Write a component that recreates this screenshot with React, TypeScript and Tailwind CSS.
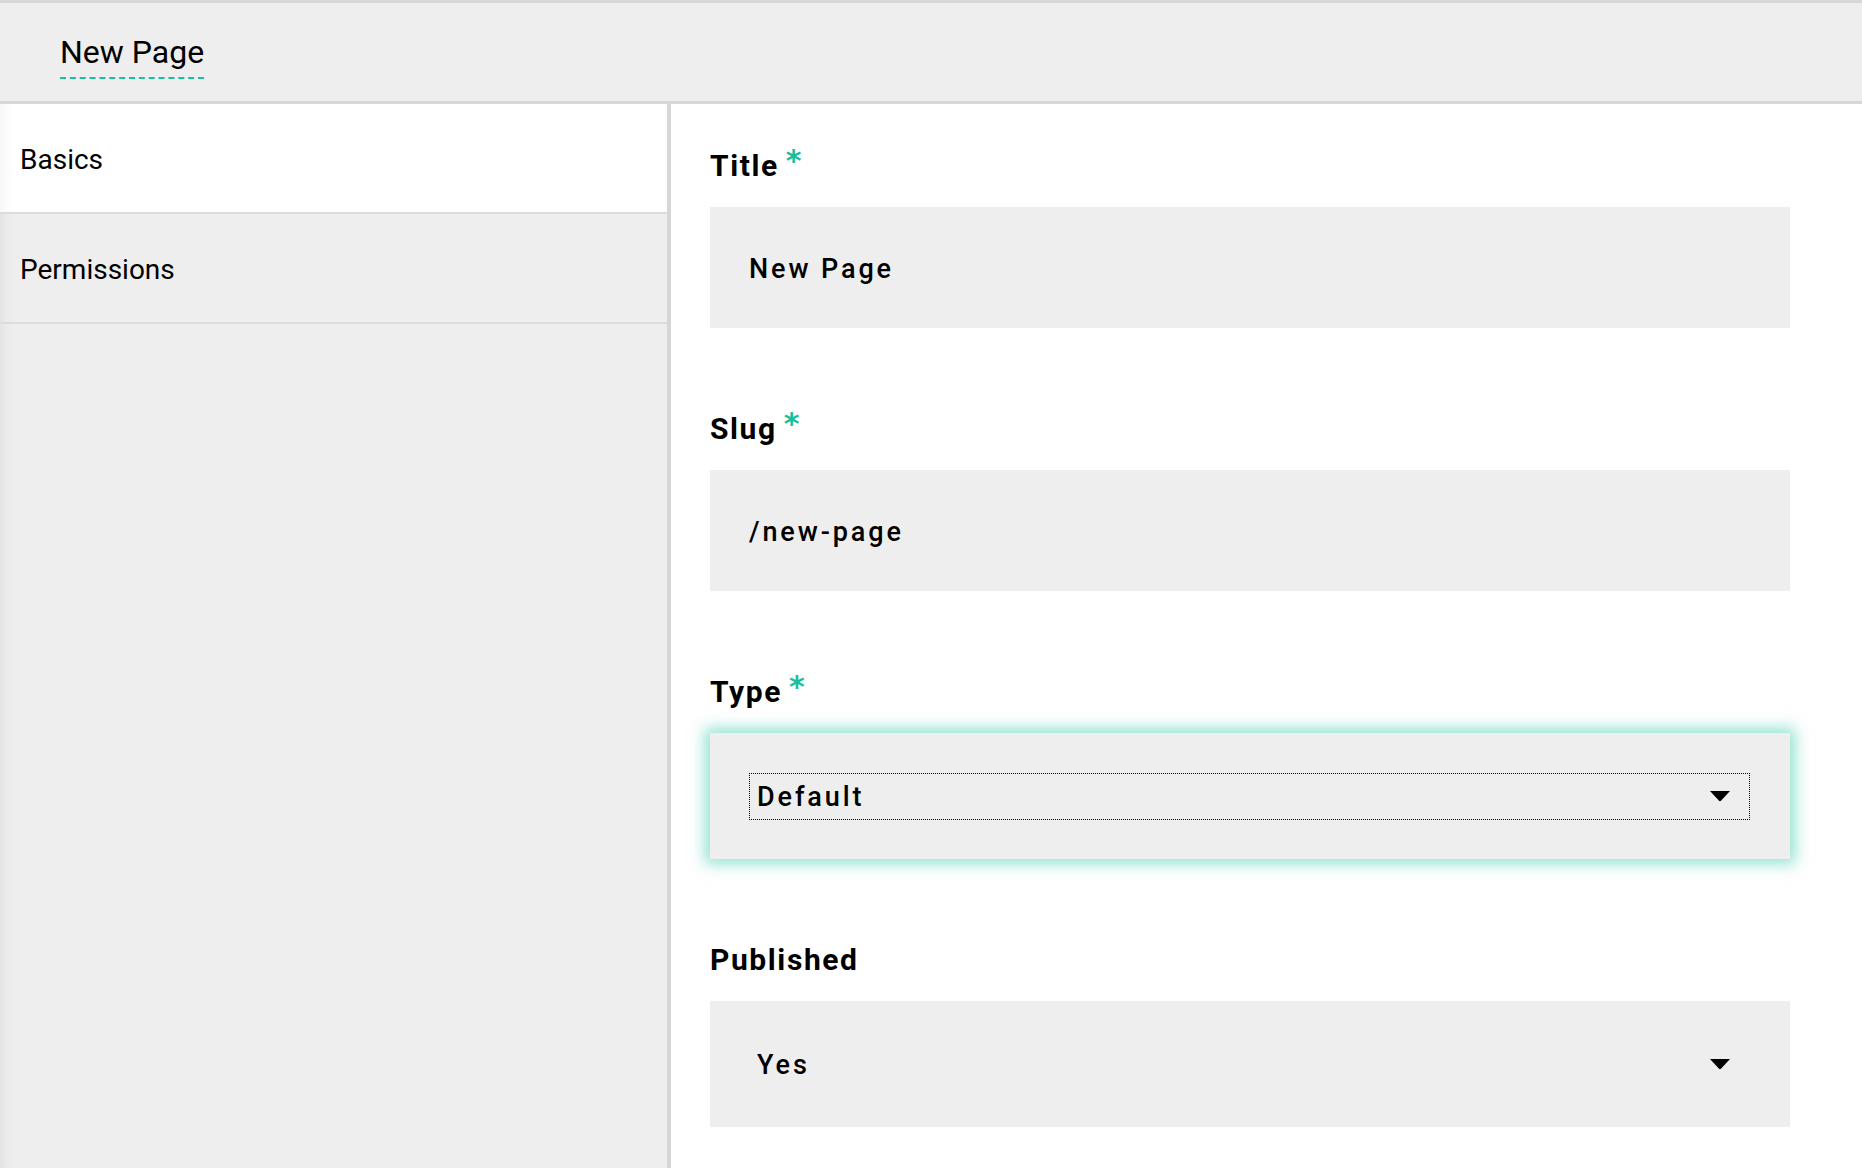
import React, { useState } from 'react';

const font = { fontFamily: 'Roboto, "Liberation Sans", sans-serif' };

const Caret: React.FC = () => (
  <svg width="20" height="11" viewBox="0 0 20 11" className="shrink-0">
    <path d="M0 0 H20 L11.2 9.6 Q10 10.8 8.8 9.6 Z" fill="#000" />
  </svg>
);

const Label: React.FC<{ text: string; required?: boolean }> = ({ text, required }) => (
  <div className="flex items-start h-[40px] mb-[21px]">
    <span className="text-[30px] leading-[40px] font-bold tracking-[1.6px] text-black">{text}</span>
    {required && (
      <span
        className="ml-[7px] mt-[1px] text-[30px] leading-[28px] font-bold text-[#17c09c]"
        style={{ fontFamily: '"DejaVu Sans", sans-serif' }}
      >
        *
      </span>
    )}
  </div>
);

const TextField: React.FC<{ label: string; value: string; onChange: (v: string) => void }> = ({ label, value, onChange }) => (
  <div className="mb-[81px]">
    <Label text={label} required />
    <input
      value={value}
      onChange={(e) => onChange(e.target.value)}
      className="block w-full h-[121px] bg-[#eeeeee] px-[39px] pt-[2px] text-[27px] font-medium tracking-[2.9px] text-black outline-none"
      style={font}
    />
  </div>
);

const SelectField: React.FC<{ label: string; value: string; options: string[]; required?: boolean; focused?: boolean }> = ({
  label,
  value,
  options,
  required,
  focused,
}) => (
  <div className="mb-[81px]">
    <Label text={label} required={required} />
    <div
      className={`h-[126px] bg-[#eeeeee] pl-[40px] pr-[41px] flex items-center ${
        focused ? 'shadow-[0_0_14px_5px_rgba(40,200,165,0.5)]' : ''
      }`}
    >
      <div
        className={`relative w-full h-[45px] flex items-center ${
          focused ? 'outline-1 outline-dotted outline-black' : ''
        }`}
      >
        <select
          defaultValue={value}
          className="appearance-none bg-transparent w-full h-full pl-[7px] pr-[50px] pt-[3px] text-[27px] font-medium tracking-[2.9px] text-black outline-none"
          style={font}
        >
          {options.map((o) => (
            <option key={o}>{o}</option>
          ))}
        </select>
        <div className="absolute right-[19px] top-[17px] pointer-events-none">
          <Caret />
        </div>
      </div>
    </div>
  </div>
);

const App: React.FC = () => {
  const [title, setTitle] = useState('New Page');
  const [slug, setSlug] = useState('/new-page');
  const [tab, setTab] = useState('Basics');

  return (
    <div className="h-screen flex flex-col bg-white overflow-hidden" style={font}>
      {/* header */}
      <div className="h-[104px] shrink-0 bg-[#eeeeee] border-t-[3px] border-b-[3px] border-[#d6d6d6] pl-[60px] pt-[30px]">
        <span className="inline-block text-[32px] leading-[38px] text-black pb-[6px] border-b-2 border-dashed border-[#1bbf9c]">
          New Page
        </span>
      </div>

      <div className="flex flex-1 min-h-0">
        {/* sidebar */}
        <div className="w-[671px] shrink-0 bg-[#eeeeee] border-r-[4px] border-[#d6d6d6] shadow-[inset_14px_0_14px_-12px_rgba(0,0,0,0.07)]">
          {['Basics', 'Permissions'].map((t) => (
            <div
              key={t}
              onClick={() => setTab(t)}
              className={`h-[110px] flex items-center pl-[20px] pt-[3px] border-b-2 border-[#dcdcdc] text-[28px] text-black cursor-pointer ${
                tab === t ? 'bg-white shadow-[inset_14px_0_14px_-12px_rgba(0,0,0,0.06)]' : ''
              }`}
            >
              {t}
            </div>
          ))}
        </div>

        {/* form */}
        <div className="flex-1 pl-[39px] pr-[72px] pt-[42px]">
          <TextField label="Title" value={title} onChange={setTitle} />
          <TextField label="Slug" value={slug} onChange={setSlug} />
          <SelectField label="Type" value="Default" options={['Default', 'Landing', 'Blog']} required focused />
          <SelectField label="Published" value="Yes" options={['Yes', 'No']} />
        </div>
      </div>
    </div>
  );
};

export default App;
